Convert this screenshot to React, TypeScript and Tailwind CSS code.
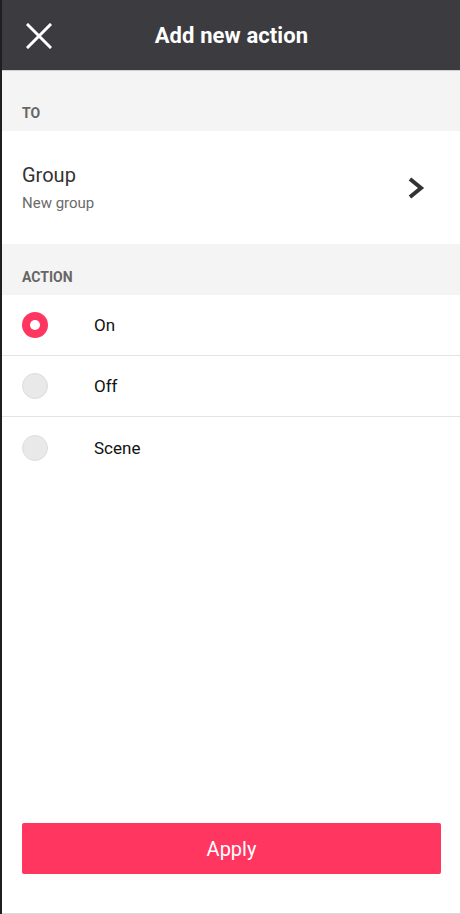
import { useState } from "react";

const options = ["On", "Off", "Scene"];

export default function App() {
  const [selected, setSelected] = useState("On");

  return (
    <div className="min-h-[914px] h-[914px] flex bg-[#1f1f1f] font-['Roboto',sans-serif]">
      <div className="ml-[2px] flex-1 flex flex-col bg-white border-b border-[#d9d9d9]">
        {/* Header */}
        <div className="h-[71px] bg-[#3c3b40] flex items-center relative border-b border-[#cfcfcf]">
          <button className="absolute left-[22px] top-[21px] w-[30px] h-[30px] flex items-center justify-center">
            <svg width="26" height="26" viewBox="0 0 26 26" fill="none">
              <path d="M2 2L24 24M24 2L2 24" stroke="white" strokeWidth="3" strokeLinecap="square" />
            </svg>
          </button>
          <h1 className="flex-1 text-center text-white text-[22px] font-bold tracking-[0.1px]">Add new action</h1>
        </div>

        {/* TO section */}
        <div className="h-[60px] bg-[#f4f4f4] flex items-end pb-[11px] px-5">
          <span className="text-[14px] font-bold text-[#666] leading-none">TO</span>
        </div>
        <div className="h-[113px] flex items-center px-5">
          <div className="flex-1 mt-[3px]">
            <div className="text-[20px] text-[#333] leading-tight">Group</div>
            <div className="text-[15px] text-[#6b6b6b] mt-[4px]">New group</div>
          </div>
          <svg width="18" height="24" viewBox="0 0 18 24" className="mr-[16px]">
            <path d="M3 3L14 12L3 21" stroke="#333" strokeWidth="4" fill="none" />
          </svg>
        </div>

        {/* ACTION section */}
        <div className="h-[51px] bg-[#f4f4f4] flex items-end pb-[11px] px-5">
          <span className="text-[14px] font-bold text-[#666] leading-none">ACTION</span>
        </div>
        <div className="flex flex-col">
          {options.map((opt, i) => {
            const on = selected === opt;
            return (
              <button
                key={opt}
                onClick={() => setSelected(opt)}
                className={`h-[61px] flex items-center px-5 text-left ${i < options.length - 1 ? "border-b border-[#e4e4e4]" : ""}`}
              >
                {on ? (
                  <span className="w-[26px] h-[26px] rounded-full bg-[#ff3660] flex items-center justify-center">
                    <span className="w-[10px] h-[10px] rounded-full bg-white" />
                  </span>
                ) : (
                  <span className="w-[26px] h-[26px] rounded-full bg-[#e9e9e9] border border-[#dcdcdc]" />
                )}
                <span className="ml-[46px] mt-[2px] text-[17px] text-[#111]">{opt}</span>
              </button>
            );
          })}
        </div>

        <div className="flex-1" />

        {/* Apply */}
        <div className="px-5 pb-[39px]">
          <button className="w-[419px] h-[51px] bg-[#ff3660] rounded-[2px] text-white text-[20px] flex items-center justify-center">
            Apply
          </button>
        </div>
      </div>
    </div>
  );
}
